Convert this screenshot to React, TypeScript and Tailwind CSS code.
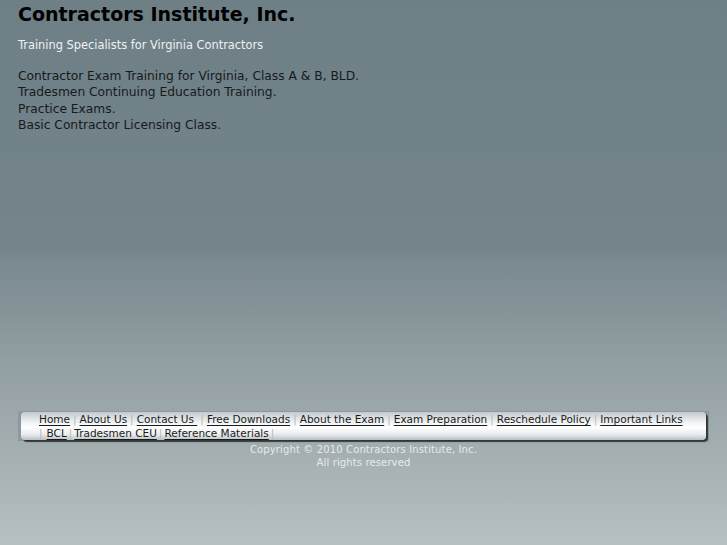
import React from "react";

const row1 = [
  "Home",
  "About Us",
  "Contact Us ",
  "Free Downloads",
  "About the Exam",
  "Exam Preparation",
  "Reschedule Policy",
  "Important Links",
];

const row2 = ["BCL", "Tradesmen CEU", "Reference Materials"];

function Sep({ className = "" }: { className?: string }) {
  return <span className={`text-[#b4b9bc] ${className}`}>|</span>;
}

export default function App() {
  return (
    <div className="min-h-screen w-full bg-[linear-gradient(180deg,#6e7f86_0%,#74848a_46%,#7b8a8f_48%,#98a4a8_72%,#b7c0c1_100%)] font-['DejaVu_Sans',sans-serif]">
      {/* Header */}
      <div className="h-[411px] px-[18px] pt-[2px]">
        <h1 className="text-[19px] font-bold text-black leading-[24px]">Contractors Institute, Inc.</h1>
        <p className="mt-[12px] text-[11.4px] text-[#eef1f2] leading-[15px]">
          Training Specialists for Virginia Contractors
        </p>
        <div className="mt-[15px] text-[12.25px] text-[#151a1c] leading-[16.4px]">
          <p>Contractor Exam Training for Virginia, Class A &amp; B, BLD.</p>
          <p>Tradesmen Continuing Education Training.</p>
          <p>Practice Exams.</p>
          <p>Basic Contractor Licensing Class.</p>
        </div>
      </div>

      {/* Nav */}
      <div className="mx-[18px] w-[691px] bg-[#8c9a9f] py-[1px] px-[3px]">
        <div className="rounded-[4px] bg-[linear-gradient(180deg,#c3cacd_0%,#eef1f2_35%,#ffffff_55%,#e9ecee_80%,#b9c0c3_100%)] shadow-[2px_2px_1px_rgba(20,20,20,0.75)] pl-[18px] pr-[10px] text-[10.5px] leading-[14px] text-[#1b1b1b]">
          <div className="flex items-center whitespace-pre">
            {row1.map((label, i) => (
              <React.Fragment key={label}>
                {i > 0 && <Sep className="mx-[3px]" />}
                <a className="underline underline-offset-2">{label}</a>
              </React.Fragment>
            ))}
          </div>
          <div className="flex items-center whitespace-pre">
            <Sep className="mr-[4px]" />
            {row2.map((label) => (
              <React.Fragment key={label}>
                <a className="underline underline-offset-2">{label}</a>
                <Sep className="mx-[2px]" />
              </React.Fragment>
            ))}
          </div>
        </div>
      </div>

      {/* Footer */}
      <div className="mt-[2px] text-center text-[10px] leading-[13px] tracking-[0.13px] text-[#e6eaeb]">
        <p>Copyright © 2010 Contractors Institute, Inc.</p>
        <p>All rights reserved</p>
      </div>
    </div>
  );
}
